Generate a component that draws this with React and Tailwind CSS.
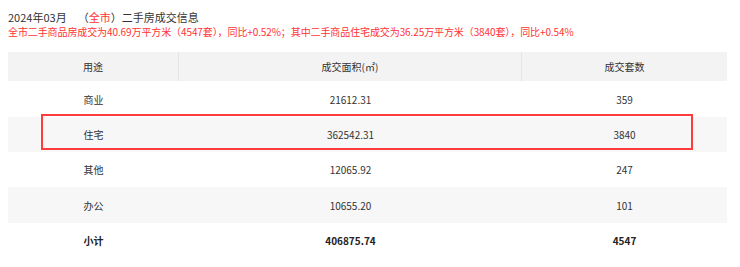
export default function App() {
  const rows = [
    { k: "商业", a: "21612.31", n: "359", h: "h-[36px]", bg: "bg-white" },
    { k: "住宅", a: "362542.31", n: "3840", h: "h-[35px]", bg: "bg-[#f7f7f7]" },
    { k: "其他", a: "12065.92", n: "247", h: "h-[35px]", bg: "bg-white" },
    { k: "办公", a: "10655.20", n: "101", h: "h-[36px]", bg: "bg-[#f7f7f7]" },
  ];
  return (
    <div className="relative w-[740px] h-[267px] overflow-hidden bg-white font-['Microsoft_YaHei','Noto_Sans_CJK_SC',sans-serif]">
      <div className="px-2 pt-[9px]">
        <div className="text-[11px] leading-[16px] text-[#333]">
          2024年03月<span className="ml-[11px]">（</span>
          <span className="text-[#ff3333]">全市</span>）二手房成交信息
        </div>
        <div className="text-[10px] leading-[14px] text-[#ff3333] tracking-[-0.1px]">
          全市二手商品房成交为40.69万平方米（4547套），同比+0.52%；其中二手商品住宅成交为36.25万平方米（3840套），同比+0.54%
        </div>
        <div className="mt-[13px] w-[719px] text-[10px] text-[#333]">
          <div className="grid grid-cols-[171px_343px_205px] h-[29px] bg-[#f3f3f3]">
            <div className="flex items-center justify-center border-r border-[#e4e4e4]">用途</div>
            <div className="flex items-center justify-center border-r border-[#e4e4e4]">成交面积(㎡)</div>
            <div className="flex items-center justify-center">成交套数</div>
          </div>
          {rows.map((r) => (
            <div key={r.k} className={`grid grid-cols-[171px_343px_205px] ${r.h} ${r.bg}`}>
              <div className="flex items-center justify-center">{r.k}</div>
              <div className="flex items-center justify-center">{r.a}</div>
              <div className="flex items-center justify-center">{r.n}</div>
            </div>
          ))}
          <div className="grid grid-cols-[171px_343px_205px] h-[35px] font-bold text-[#222]">
            <div className="flex items-center justify-center">小计</div>
            <div className="flex items-center justify-center">406875.74</div>
            <div className="flex items-center justify-center">4547</div>
          </div>
        </div>
      </div>
      <div className="absolute left-[41px] top-[114px] w-[652px] h-[36px] border-2 border-[#ff3b3b]"></div>
    </div>
  );
}
